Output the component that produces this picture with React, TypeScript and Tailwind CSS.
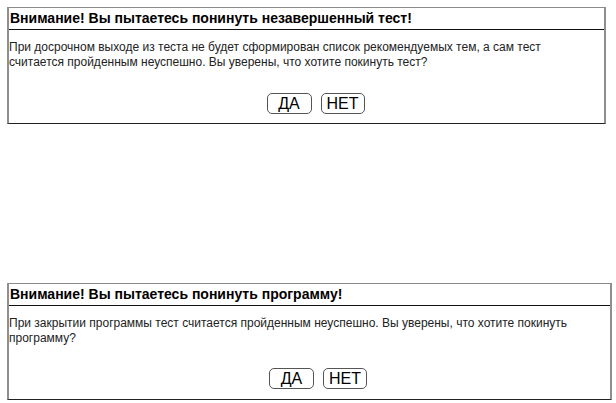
import React from "react";

function Dialog({ title, lines, width, offset }: { title: string; lines: string[]; width: string; offset: string }) {
  return (
    <div className={`${width} border-t border-t-[#8a8a8a] border-l-2 border-r-2 border-l-[#8f8f8f] border-r-[#8f8f8f] border-b border-b-[#222] bg-white`}>
      <div className="h-[22px] border-b border-[#111] pl-[1px] pt-[2px] text-[14px] font-bold leading-[17px] text-black">
        {title}
      </div>
      <div className="pl-0 pt-[10px] text-[12px] leading-[15px] text-[#222]">
        {lines.map((l, i) => (
          <div key={i}>{l}</div>
        ))}
      </div>
      <div className={`flex justify-center gap-[9px] ${offset}`}>
        <button className="h-[21px] w-[45px] rounded-[5px] border border-[#555] bg-white text-[16px] leading-[19px] text-black">ДА</button>
        <button className="h-[21px] w-[44px] rounded-[5px] border border-[#555] bg-white text-[16px] leading-[19px] text-black">НЕТ</button>
      </div>
    </div>
  );
}

export default function App() {
  return (
    <div className="h-[403px] w-[616px] bg-white" style={{ fontFamily: '"Liberation Sans", Arial, sans-serif' }}>
      <div className="pl-[7px] pt-[7px]">
        <Dialog
          width="w-[599px]"
          offset="pl-[18px] pt-[23px] pb-[9px]"
          title="Внимание! Вы пытаетесь понинуть незавершенный тест!"
          lines={[
            "При досрочном выходе из теста не будет сформирован список рекомендуемых тем, а сам тест",
            "считается пройденным неуспешно. Вы уверены, что хотите покинуть тест?",
          ]}
        />
      </div>
      <div className="pl-[7px] pt-[159px]">
        <Dialog
          width="w-[605px]"
          offset="pl-[17px] pt-[22px] pb-[10px]"
          title="Внимание! Вы пытаетесь понинуть программу!"
          lines={[
            "При закрытии программы тест считается пройденным неуспешно. Вы уверены, что хотите покинуть",
            "программу?",
          ]}
        />
      </div>
    </div>
  );
}
